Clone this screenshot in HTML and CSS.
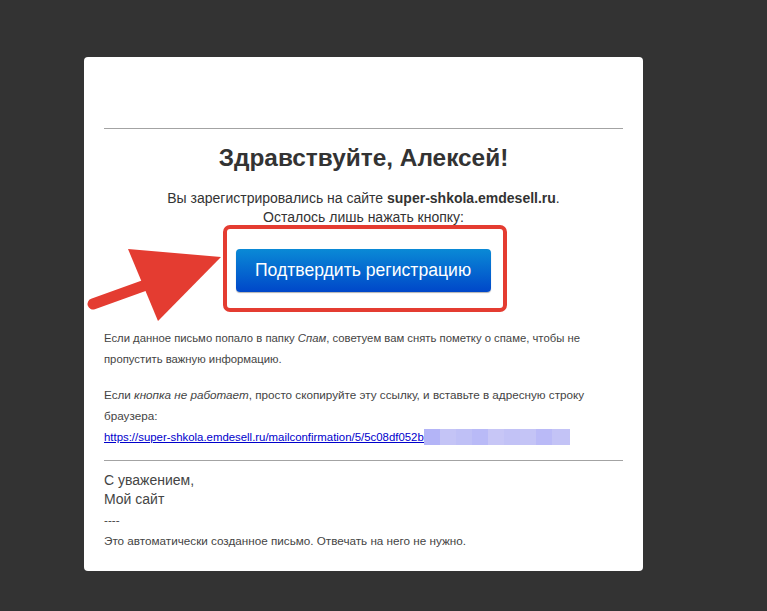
FILE: index.html
```html
<!DOCTYPE html>
<html>
<head>
  <title>Подтверждение регистрации</title>
  <link rel="stylesheet" href="styles.css">
</head>
<body>

  <div class="card">
    <hr class="rule">
    <h1 class="title">Здравствуйте, Алексей!</h1>
    <p class="intro">
      Вы зарегистрировались на сайте <b>super-shkola.emdesell.ru</b>.<br>
      Осталось лишь нажать кнопку:
    </p>

    <div class="cta">
      <span class="highlight">
        <a class="btn-primary" href="#">Подтвердить регистрацию</a>
      </span>
    </div>

    <p class="note first">
      Если данное письмо попало в папку <i>Спам</i>, советуем вам снять пометку о спаме, чтобы не
      пропустить важную информацию.
    </p>
    <p class="note second">
      Если <i>кнопка не работает</i>, просто скопируйте эту ссылку, и вставьте в адресную строку
      браузера:<br>
      <a class="link" href="#">https://super-shkola.emdesell.ru/mailconfirmation/5/5c08df052b2</a><span class="blur"><span class="px" style="background:#b3b4f7"></span><span class="px" style="background:#c4c4f6"></span><span class="px" style="background:#bfc0f6"></span><span class="px" style="background:#b9baf7"></span><span class="px" style="background:#c7c6f6"></span><span class="px" style="background:#c2c2f6"></span><span class="px" style="background:#c4c4f6"></span><span class="px" style="background:#babaf7"></span><span class="px" style="background:#c3c3f6"></span></span>
    </p>

    <hr class="rule">
    <p class="sign">
      С уважением,<br>
      Мой сайт
    </p>
    <p class="footer">
      ----<br>
      Это автоматически созданное письмо. Отвечать на него не нужно.
    </p>

    <svg class="arrow" width="150" height="90" viewBox="0 0 150 90">
      <line x1="13" y1="64" x2="88" y2="37" stroke="#e43c31" stroke-width="11" stroke-linecap="round"/>
      <polygon points="48,9 141,17 78,81" fill="#e43c31"/>
    </svg>
  </div>

</body>
</html>
```

FILE: styles.css
```css
body {
  margin: 0;
  background-color: #333333;
  font-family: "Liberation Sans", Arial, sans-serif;
  color: #333333;
}

.card {
  position: relative;
  width: 519px;
  margin: 57px 0 0 84px;
  padding: 71px 20px 20px 20px;
  background-color: #ffffff;
  border-radius: 4px;
}

.rule {
  margin: 0;
  border: 0;
  border-top: 1px solid #a3a3a3;
  height: 0;
}

.title {
  margin: 14px 0 16px 0;
  font-size: 24.4px;
  line-height: 30px;
  text-align: center;
  color: #333333;
}

.intro {
  margin: 0;
  font-size: 14px;
  line-height: 19px;
  text-align: center;
}

.cta {
  text-align: center;
  margin-top: -2px;
}

.highlight {
  display: inline-block;
  padding: 20px 12px 16px 9px;
  margin-left: 2px;
  border: 4px solid #e43c31;
  border-radius: 7px;
}

.btn-primary {
  display: block;
  width: 255px;
  height: 43px;
  box-sizing: border-box;
  line-height: 43px;
  font-size: 17.6px;
  color: #ffffff;
  text-decoration: none;
  text-align: center;
  background: linear-gradient(#0a8ad6, #0047c9);
  border-radius: 4px;
  box-shadow: 0 1px 1px rgba(0, 0, 0, 0.3);
}

.note {
  margin: 14px 0 0 0;
  font-size: 11.7px;
  line-height: 21px;
  color: #444444;
}

.note.first {
  margin-top: 16px;
  font-size: 11.3px;
}

.link {
  color: #0000cc;
  font-size: 11.4px;
}

.blur {
  display: inline-block;
  vertical-align: top;
  margin: 3px 0 0 -6px;
  height: 16px;
  font-size: 0;
}

.px {
  display: inline-block;
  width: 16px;
  height: 16px;
}

.px:last-child {
  width: 18px;
}

.note + .rule {
  margin-top: 12px;
}

.sign {
  margin: 10px 0 0 0;
  font-size: 14px;
  line-height: 19px;
  color: #444444;
}

.footer {
  margin: 0;
  font-size: 11.7px;
  line-height: 21px;
  color: #444444;
}

.arrow {
  position: absolute;
  top: 183px;
  left: -4px;
}
```
